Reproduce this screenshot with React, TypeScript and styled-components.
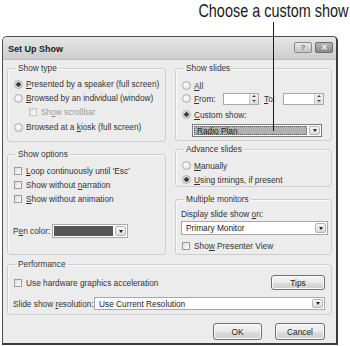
import React from 'react';
import styled, { createGlobalStyle } from 'styled-components';

const Global = createGlobalStyle`
  html, body {
    margin: 0;
    padding: 0;
    background: #ffffff;
  }
  body {
    font-family: "Liberation Sans", Arial, sans-serif;
    font-size: 8.3px;
    color: #333;
  }
`;

const Page = styled.div`
  position: relative;
  width: 350px;
  height: 346px;
  overflow: hidden;
`;

const CaptionBar = styled.div`
  height: 36px;
  display: flex;
  justify-content: flex-end;
  align-items: flex-start;
`;

const Caption = styled.div`
  font-family: "Liberation Sans", Arial, sans-serif;
  font-size: 19px;
  line-height: 20px;
  margin-top: 1px;
  margin-right: 2px;
  color: #1a1a1a;
  white-space: nowrap;
  transform: scaleX(0.76);
  transform-origin: right center;
`;

// callout line from the caption down to the custom show box
const Leader = styled.div`
  position: absolute;
  left: 273px;
  top: 22px;
  width: 1px;
  height: 109px;
  background: #1a1a1a;
`;

const Dialog = styled.div`
  margin-left: 2px;
  width: 336px;
  height: 309px;
  box-sizing: border-box;
  border: 1px solid #505050;
  border-right: 2px solid #3c3c3c;
  border-bottom: 2px solid #3c3c3c;
  border-radius: 5px 5px 0 0;
  background: #ececec;
  display: flex;
  flex-direction: column;
`;

const TitleBar = styled.div`
  height: 21px;
  display: flex;
  align-items: center;
  justify-content: space-between;
  padding: 1px 3px 0 5px;
  border-radius: 4px 4px 0 0;
  background: linear-gradient(#e6e6e6, #cdcdcd);
  border-bottom: 1px solid #bdbdbd;
`;

const Title = styled.div`
  font-size: 9px;
  font-weight: bold;
  color: #1e1e1e;
`;

const TitleButtons = styled.div`
  display: flex;
  gap: 3px;
  margin-top: -3px;
`;

const TitleButton = styled.div<{ $close?: boolean }>`
  width: 18px;
  height: 11px;
  box-sizing: border-box;
  border: 1px solid ${(p) => (p.$close ? '#6a6a6a' : '#8a8a8a')};
  border-radius: 2px;
  background: ${(p) =>
    p.$close ? 'linear-gradient(#b4b4b4, #8c8c8c)' : 'linear-gradient(#e8e8e8, #c4c4c4)'};
  color: ${(p) => (p.$close ? '#f4f4f4' : '#777')};
  font-size: 8px;
  font-weight: bold;
  line-height: 9px;
  text-align: center;
`;

const Body = styled.div`
  flex: 1;
  padding: 3px 4px 0 4px;
  display: flex;
  flex-direction: column;
`;

const Columns = styled.div`
  display: grid;
  grid-template-columns: 159px 157px;
  column-gap: 9px;
`;

const Column = styled.div<{ $gap: number }>`
  display: flex;
  flex-direction: column;
  gap: ${(p) => p.$gap}px;
`;

const Group = styled.fieldset<{ $pad: string; $grow?: boolean }>`
  margin: 0;
  min-width: 0;
  padding: ${(p) => p.$pad};
  border: 1px solid #cdcdcd;
  border-radius: 3px;
  box-shadow: inset 1px 1px 0 #fafafa;
  display: flex;
  flex-direction: column;
  ${(p) => (p.$grow ? 'flex: 1;' : '')}
`;

const Legend = styled.legend`
  padding: 0 2px;
  margin-left: 3px;
  line-height: 10px;
  height: 10px;
  color: #333;
`;

const Row = styled.div<{ $h?: number; $mt?: number; $indent?: number }>`
  height: ${(p) => p.$h ?? 14}px;
  margin-top: ${(p) => p.$mt ?? 0}px;
  margin-left: ${(p) => p.$indent ?? 0}px;
  display: flex;
  align-items: center;
  white-space: nowrap;
`;

const Label = styled.span<{ $dim?: boolean; $w?: number }>`
  color: ${(p) => (p.$dim ? '#9a9a9a' : '#333')};
  ${(p) => (p.$w ? `width: ${p.$w}px; flex: none;` : '')}
`;

const Radio = styled.span<{ $on?: boolean }>`
  flex: none;
  width: 9px;
  height: 9px;
  margin: 0 3px 0 1px;
  box-sizing: border-box;
  border: 1px solid #acacac;
  border-radius: 50%;
  background: ${(p) =>
    p.$on
      ? 'radial-gradient(circle, #3c3c3c 0 1.9px, #e6e6e6 2.6px)'
      : 'radial-gradient(circle at 40% 40%, #ffffff, #d8d8d8)'};
`;

const Check = styled.span<{ $dim?: boolean }>`
  flex: none;
  width: 8px;
  height: 8px;
  margin: 0 4px 0 1px;
  box-sizing: border-box;
  border: 1px solid ${(p) => (p.$dim ? '#c4c4c4' : '#9a9a9a')};
  background: linear-gradient(135deg, #dcdcdc, #ffffff);
`;

const Spin = styled.div<{ $w: number }>`
  width: ${(p) => p.$w}px;
  height: 12px;
  box-sizing: border-box;
  border: 1px solid #a8a8a8;
  background: #fff;
  display: flex;
  justify-content: flex-end;
`;

const SpinArrows = styled.div`
  width: 8px;
  display: flex;
  flex-direction: column;
  border-left: 1px solid #c8c8c8;
  background: linear-gradient(#f4f4f4, #dcdcdc);
`;

const SpinArrow = styled.div<{ $down?: boolean }>`
  flex: 1;
  display: flex;
  align-items: center;
  justify-content: center;
  &::after {
    content: '';
    border-left: 2px solid transparent;
    border-right: 2px solid transparent;
    ${(p) => (p.$down ? 'border-top' : 'border-bottom')}: 2px solid #444;
  }
`;

const Combo = styled.div<{ $w: number; $h?: number; $ml?: number; $active?: boolean }>`
  width: ${(p) => p.$w}px;
  height: ${(p) => p.$h ?? 14}px;
  margin-left: ${(p) => p.$ml ?? 0}px;
  flex: none;
  box-sizing: border-box;
  border: 1px solid ${(p) => (p.$active ? '#7a7a7a' : '#a8a8a8')};
  background: #fff;
  display: flex;
  align-items: stretch;
  padding: 1px;
`;

const ComboField = styled.div<{ $fill?: string; $dotted?: boolean }>`
  flex: 1;
  display: flex;
  align-items: center;
  padding-left: 3px;
  background: ${(p) => p.$fill ?? 'transparent'};
  ${(p) => (p.$dotted ? 'outline: 1px dotted #555; outline-offset: -1px;' : '')}
  color: #222;
`;

const ComboArrow = styled.div`
  width: 11px;
  margin-left: 2px;
  flex: none;
  box-sizing: border-box;
  border: 1px solid #b4b4b4;
  border-radius: 2px;
  background: linear-gradient(#f6f6f6, #dadada);
  display: flex;
  align-items: center;
  justify-content: center;
  &::after {
    content: '';
    border-left: 2.5px solid transparent;
    border-right: 2.5px solid transparent;
    border-top: 3px solid #222;
  }
`;

const Button = styled.div<{ $w: number; $h?: number; $ml?: string }>`
  width: ${(p) => p.$w}px;
  height: ${(p) => p.$h ?? 17}px;
  margin-left: ${(p) => p.$ml ?? '0'};
  flex: none;
  box-sizing: border-box;
  border: 1px solid #707070;
  border-radius: 3px;
  background: linear-gradient(#f3f3f3 0%, #ebebeb 50%, #dcdcdc 51%, #cfcfcf 100%);
  box-shadow: inset 0 0 0 1px #fbfbfb;
  display: flex;
  align-items: center;
  justify-content: center;
  color: #222;
`;

const Footer = styled.div`
  margin-top: 8px;
  padding-right: 7px;
  display: flex;
  justify-content: flex-end;
  gap: 13px;
`;

const U = styled.span`
  text-decoration: underline;
`;

export default function App() {
  return (
    <Page>
      <Global />
      <CaptionBar>
        <Caption>Choose a custom show</Caption>
      </CaptionBar>
      <Dialog>
        <TitleBar>
          <Title>Set Up Show</Title>
          <TitleButtons>
            <TitleButton>?</TitleButton>
            <TitleButton $close>✕</TitleButton>
          </TitleButtons>
        </TitleBar>
        <Body>
          <Columns>
            <Column $gap={7}>
              <Group $pad="4px 5px 7px 5px">
                <Legend>Show type</Legend>
                <Row>
                  <Radio $on />
                  <Label><U>P</U>resented by a speaker (full screen)</Label>
                </Row>
                <Row>
                  <Radio />
                  <Label><U>B</U>rowsed by an individual (window)</Label>
                </Row>
                <Row $indent={15}>
                  <Check $dim />
                  <Label $dim>Sh<U>o</U>w scrollbar</Label>
                </Row>
                <Row $mt={1}>
                  <Radio />
                  <Label>Browsed at a <U>k</U>iosk (full screen)</Label>
                </Row>
              </Group>
              <Group $pad="5px 5px 0 5px" $grow>
                <Legend>Show options</Legend>
                <Row>
                  <Check />
                  <Label><U>L</U>oop continuously until 'Esc'</Label>
                </Row>
                <Row>
                  <Check />
                  <Label>Show without <U>n</U>arration</Label>
                </Row>
                <Row>
                  <Check />
                  <Label><U>S</U>how without animation</Label>
                </Row>
                <Row $mt={18}>
                  <Label $w={39}>P<U>e</U>n color:</Label>
                  <Combo $w={76}>
                    <ComboField $fill="#555" />
                    <ComboArrow />
                  </Combo>
                </Row>
              </Group>
            </Column>
            <Column $gap={3}>
              <Group $pad="6px 5px 3px 5px">
                <Legend>Show slides</Legend>
                <Row $h={13}>
                  <Radio />
                  <Label><U>A</U>ll</Label>
                </Row>
                <Row $h={13}>
                  <Radio />
                  <Label $w={29}><U>F</U>rom:</Label>
                  <Spin $w={36}>
                    <SpinArrows>
                      <SpinArrow />
                      <SpinArrow $down />
                    </SpinArrows>
                  </Spin>
                  <Label $w={19} style={{ marginLeft: 5 }}><U>T</U>o:</Label>
                  <Spin $w={41}>
                    <SpinArrows>
                      <SpinArrow />
                      <SpinArrow $down />
                    </SpinArrows>
                  </Spin>
                </Row>
                <Row $h={13} $mt={3}>
                  <Radio $on />
                  <Label><U>C</U>ustom show:</Label>
                </Row>
                <Row $h={13} $mt={3}>
                  <Combo $w={130} $h={13} $ml={11} $active>
                    <ComboField $fill="#b0b0b0" $dotted>Radio Plan</ComboField>
                    <ComboArrow />
                  </Combo>
                </Row>
              </Group>
              <Group $pad="5px 5px 0 5px">
                <Legend>Advance slides</Legend>
                <Row $h={13}>
                  <Radio />
                  <Label><U>M</U>anually</Label>
                </Row>
                <Row $h={13} $mt={1}>
                  <Radio $on />
                  <Label><U>U</U>sing timings, if present</Label>
                </Row>
              </Group>
              <Group $pad="4px 4px 1px 5px" style={{ marginTop: 4 }}>
                <Legend>Multiple monitors</Legend>
                <Row $h={12}>
                  <Label>Display slide show <U>o</U>n:</Label>
                </Row>
                <Row $mt={1}>
                  <Combo $w={147}>
                    <ComboField>Primary Monitor</ComboField>
                    <ComboArrow />
                  </Combo>
                </Row>
                <Row $mt={4}>
                  <Check />
                  <Label>Sho<U>w</U> Presenter View</Label>
                </Row>
              </Group>
            </Column>
          </Columns>
          <Group $pad="6px 6px 4px 5px" style={{ marginTop: 4 }}>
            <Legend>Performance</Legend>
            <Row $h={15}>
              <Check />
              <Label>Use hardware graphics acceleration</Label>
              <Button $w={54} $h={15} $ml="auto">Tips</Button>
            </Row>
            <Row $h={13} $mt={7}>
              <Label $w={81}>Slide show <U>r</U>esolution:</Label>
              <Combo $w={231} $h={13}>
                <ComboField>Use Current Resolution</ComboField>
                <ComboArrow />
              </Combo>
            </Row>
          </Group>
          <Footer>
            <Button $w={49}>OK</Button>
            <Button $w={50}>Cancel</Button>
          </Footer>
        </Body>
      </Dialog>
      <Leader />
    </Page>
  );
}
